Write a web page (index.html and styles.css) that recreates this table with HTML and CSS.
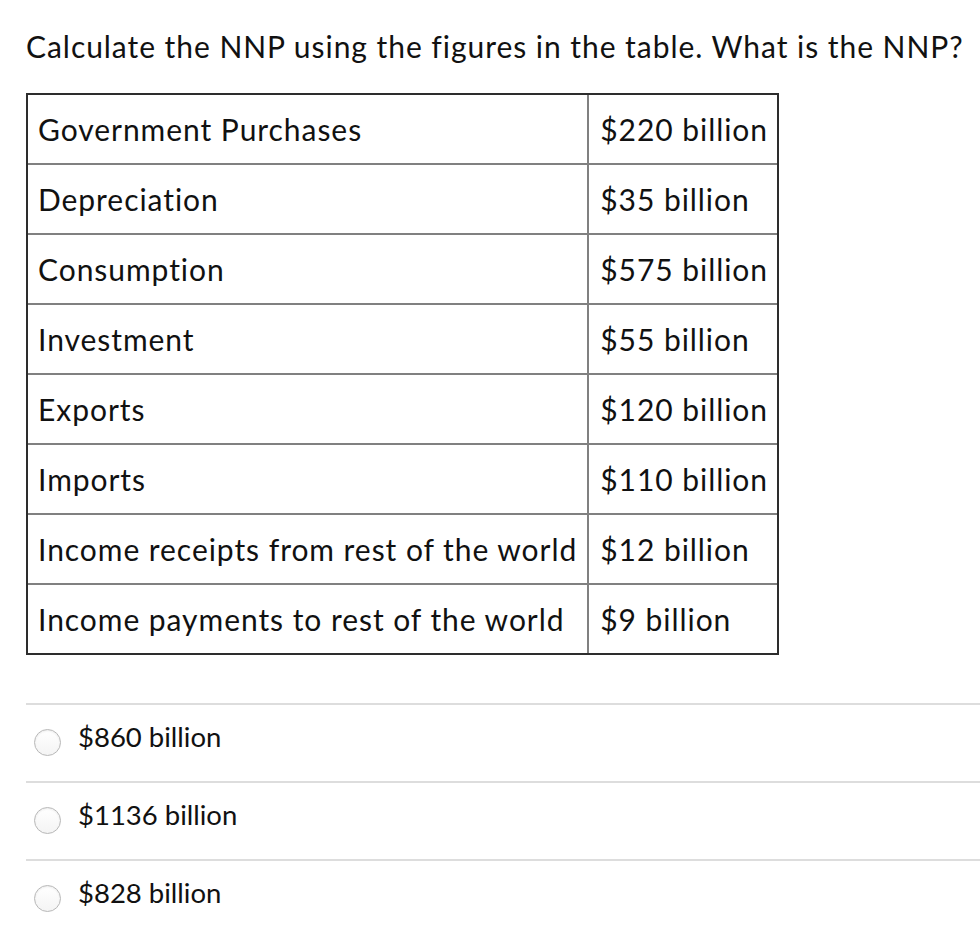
FILE: index.html
```html
<!DOCTYPE html>
<html lang="en">
<head>
<meta charset="utf-8">
<title>NNP Question</title>
<link rel="stylesheet" href="styles.css">
</head>
<body>
<div class="question">
  <p class="title">Calculate the NNP using the figures in the table. What is the NNP?</p>
  <table class="data">
    <tr><td>Government Purchases</td><td>$220 billion</td></tr>
    <tr><td>Depreciation</td><td>$35 billion</td></tr>
    <tr><td>Consumption</td><td>$575 billion</td></tr>
    <tr><td>Investment</td><td>$55 billion</td></tr>
    <tr><td>Exports</td><td>$120 billion</td></tr>
    <tr><td>Imports</td><td>$110 billion</td></tr>
    <tr><td>Income receipts from rest of the world</td><td>$12 billion</td></tr>
    <tr><td>Income payments to rest of the world</td><td>$9 billion</td></tr>
  </table>
  <div class="answers">
    <div class="answer"><span class="radio"></span><span class="label">$860 billion</span></div>
    <div class="answer"><span class="radio"></span><span class="label">$1136 billion</span></div>
    <div class="answer"><span class="radio"></span><span class="label">$828 billion</span></div>
  </div>
</div>
</body>
</html>
```

FILE: styles.css
```css
html, body {
  margin: 0;
  padding: 0;
  background: #ffffff;
}

body {
  font-family: Lato, "Open Sans", sans-serif;
  color: #111111;
}

.question {
  padding: 28px 0 0 26px;
}

.title {
  margin: 0;
  font-size: 30px;
  line-height: 36px;
  letter-spacing: 0.95px;
}

.data {
  margin-top: 29px;
  border-collapse: separate;
  border-spacing: 0;
  border: 2px solid #2d2d2d;
  font-size: 30px;
  line-height: 36px;
  letter-spacing: 0.95px;
}

.data td {
  padding: 16px 10px 16px 10px;
  border-bottom: 2px solid #808080;
  vertical-align: middle;
  white-space: nowrap;
}

.data td:first-child {
  width: 538px;
  border-right: 2px solid #808080;
}

.data td:last-child {
  width: 168px;
  padding-left: 11px;
  padding-right: 9px;
}

.data tr:last-child td {
  border-bottom: none;
}

.answers {
  margin-top: 48px;
}

.answer {
  display: flex;
  align-items: flex-start;
  border-top: 2px solid #dddddd;
  padding: 15px 0 25px 8px;
  font-size: 27.5px;
  line-height: 34px;
}

.radio {
  flex: none;
  width: 25px;
  height: 25px;
  margin-top: 9px;
  border: 1px solid #b8b8b8;
  border-radius: 50%;
  background: linear-gradient(#ffffff, #f4f4f4);
  box-shadow: inset 0 1px 2px rgba(0, 0, 0, 0.08);
}

.label {
  margin-left: 17px;
}
```
